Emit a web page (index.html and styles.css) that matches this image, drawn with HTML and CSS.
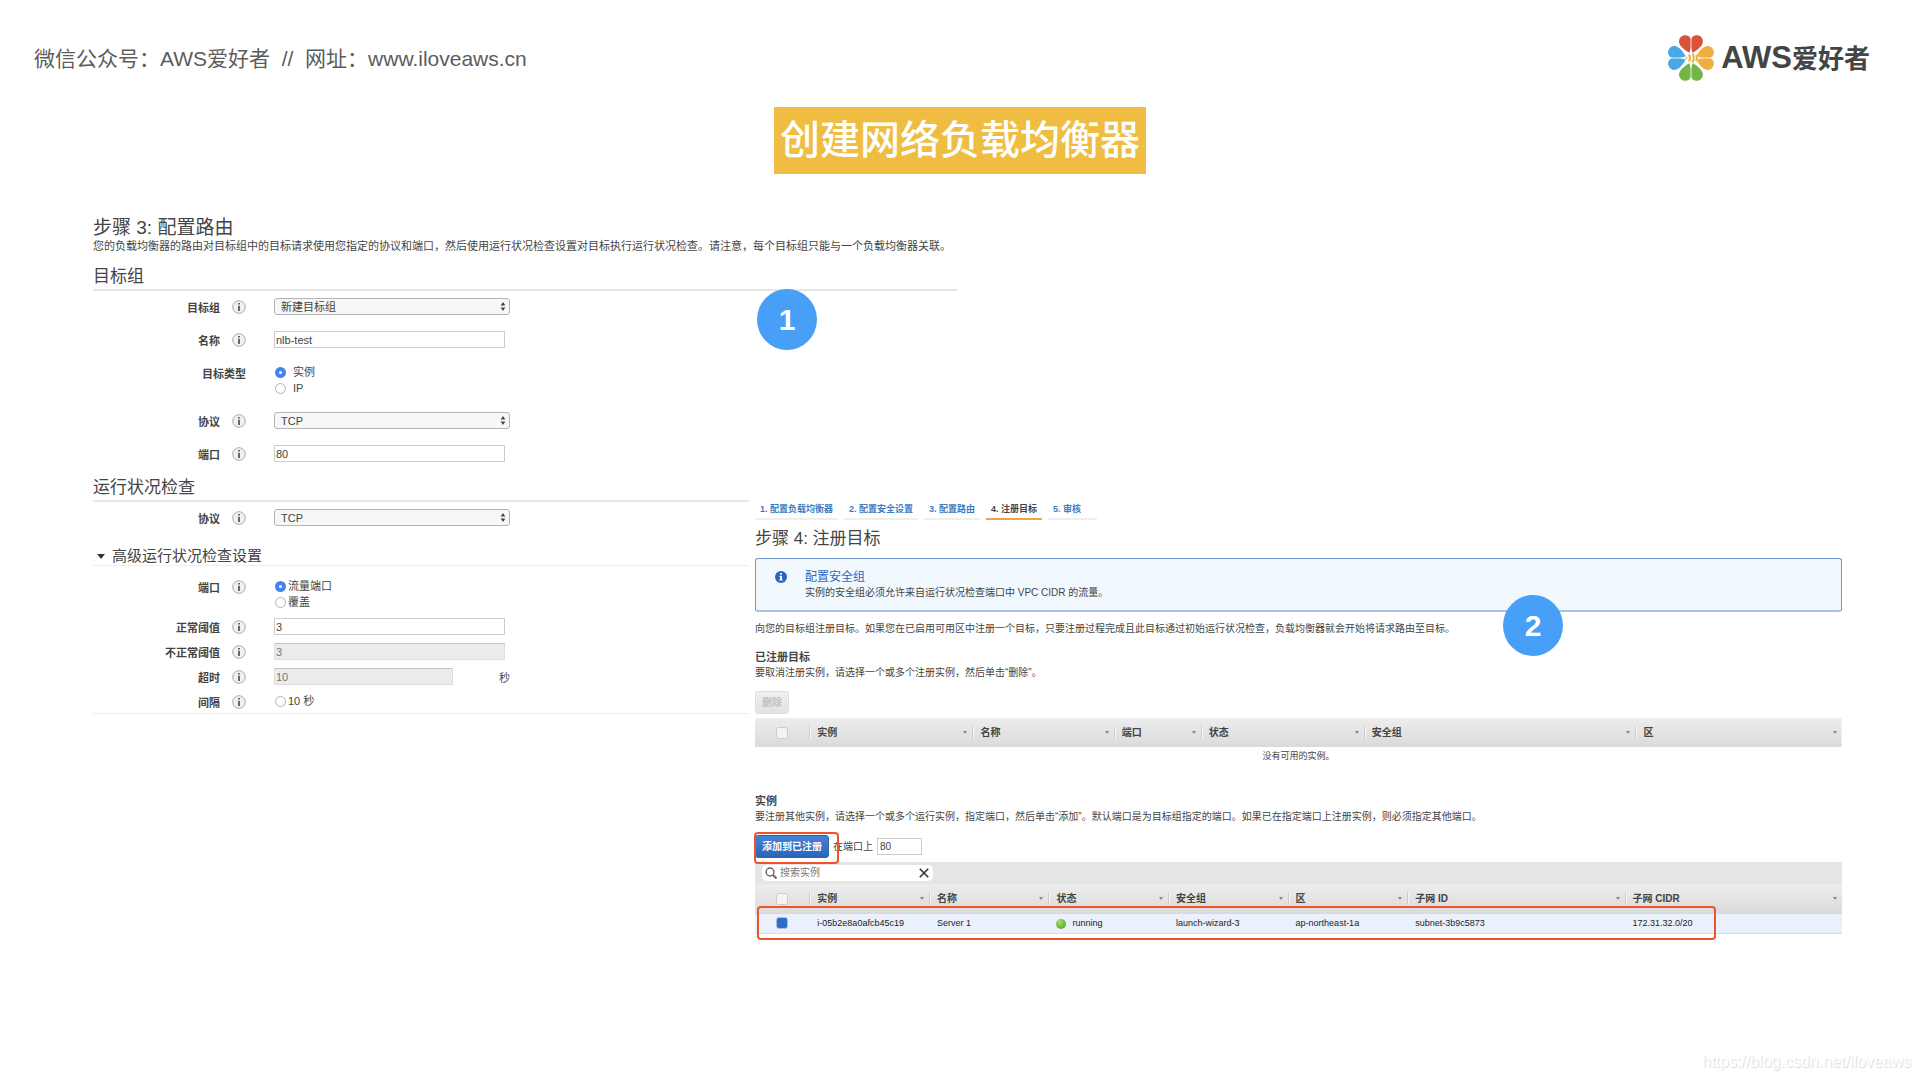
FILE: index.html
```html
<!DOCTYPE html>
<html lang="zh-CN">
<head>
<meta charset="utf-8">
<meta name="viewport" content="width=device-width, initial-scale=1">
<title>创建网络负载均衡器</title>
<link rel="stylesheet" href="styles.css">
</head>
<body>
<svg class="defs" width="0" height="0" aria-hidden="true">
  <symbol id="info" viewBox="0 0 14 14">
    <circle cx="7" cy="7" r="6.300" fill="#f1f1f1" stroke="#aaa"/>
    <path d="M6 3h2v1.600H6zM6 5.800H8V11H6z" fill="#666"/>
  </symbol>
  <symbol id="updown" viewBox="0 0 6 10">
    <path d="M3 0l2.600 4H.4zM3 10L.4 6h5.200z" fill="#444"/>
  </symbol>
</svg>

<header class="top">
  <p class="account">微信公众号：AWS爱好者&nbsp; //&nbsp; 网址：www.iloveaws.cn</p>
  <div class="logo">
    <svg class="flower" viewBox="0 0 48 48" aria-hidden="true">
      <defs><path id="petal" d="M24 18.500C21.500 15.500 17.800 10.500 17.800 6.500C17.800 2.800 20.500.2 24 .2S30.200 2.800 30.200 6.500C30.200 10.500 26.500 15.500 24 18.500z"/></defs>
      <g fill="#d9533c"><use href="#petal" transform="rotate(-19 24 24)"/><use href="#petal" transform="rotate(19 24 24)"/></g>
      <g fill="#f0ae3e"><use href="#petal" transform="rotate(71 24 24)"/><use href="#petal" transform="rotate(109 24 24)"/></g>
      <g fill="#74b548"><use href="#petal" transform="rotate(161 24 24)"/><use href="#petal" transform="rotate(199 24 24)"/></g>
      <g fill="#4aa8e8"><use href="#petal" transform="rotate(251 24 24)"/><use href="#petal" transform="rotate(289 24 24)"/></g>
      <path d="M24 .5V18M24 30V47.500M.5 24H17M31 24H47.500" stroke="#fff" stroke-width="1" opacity=".8"/>
      <ellipse cx="25.500" cy="24" rx="6" ry="5" fill="#fff"/>
      <path d="M22 20.500Q24 24 22 27.500M25.500 19.500Q28 24 25.500 28.500M29 21Q31 24 29 27" fill="none" stroke="#f0ae3e" stroke-width="2"/>
      <circle cx="19.500" cy="24" r="1" fill="#f0ae3e"/>
    </svg>
    <span class="logo-text"><span class="logo-latin">AWS</span>爱好者</span>
  </div>
</header>

<main>
  <h1 class="title"><span>创建网络负载均衡器</span></h1>

  <div class="board">
    <section class="panel routing">
      <h2 class="step">步骤 3: 配置路由</h2>
      <p class="intro">您的负载均衡器的路由对目标组中的目标请求使用您指定的协议和端口，然后使用运行状况检查设置对目标执行运行状况检查。请注意，每个目标组只能与一个负载均衡器关联。</p>

      <h3 class="group">目标组</h3>
      <div class="form loose">
        <div class="row">
          <div class="name"><label for="tg">目标组</label><svg class="info"><use href="#info"/></svg></div>
          <div class="select"><select id="tg"><option>新建目标组</option></select><svg class="updown"><use href="#updown"/></svg></div>
        </div>
        <div class="row">
          <div class="name"><label for="nm">名称</label><svg class="info"><use href="#info"/></svg></div>
          <input class="text" id="nm" type="text" value="nlb-test">
        </div>
        <div class="row">
          <div class="name"><span>目标类型</span></div>
          <div class="radios spaced">
            <label><input type="radio" name="type" checked>实例</label>
            <label><input type="radio" name="type">IP</label>
          </div>
        </div>
        <div class="row">
          <div class="name"><label for="pr">协议</label><svg class="info"><use href="#info"/></svg></div>
          <div class="select"><select id="pr"><option>TCP</option></select><svg class="updown"><use href="#updown"/></svg></div>
        </div>
        <div class="row">
          <div class="name"><label for="pt">端口</label><svg class="info"><use href="#info"/></svg></div>
          <input class="text" id="pt" type="text" value="80">
        </div>
      </div>

      <h3 class="group health">运行状况检查</h3>
      <div class="form">
        <div class="row">
          <div class="name"><label for="hp">协议</label><svg class="info"><use href="#info"/></svg></div>
          <div class="select"><select id="hp"><option>TCP</option></select><svg class="updown"><use href="#updown"/></svg></div>
        </div>
      </div>

      <h4 class="advanced"><svg viewBox="0 0 8 5" aria-hidden="true"><path d="M0 0h8L4 5z" fill="#333"/></svg>高级运行状况检查设置</h4>
      <div class="form tight">
        <div class="row">
          <div class="name"><span>端口</span><svg class="info"><use href="#info"/></svg></div>
          <div class="radios">
            <label><input type="radio" name="port" checked>流量端口</label>
            <label><input type="radio" name="port">覆盖</label>
          </div>
        </div>
        <div class="row">
          <div class="name"><label for="ok">正常阈值</label><svg class="info"><use href="#info"/></svg></div>
          <input class="text" id="ok" type="text" value="3">
        </div>
        <div class="row">
          <div class="name"><label for="bad">不正常阈值</label><svg class="info"><use href="#info"/></svg></div>
          <input class="text" id="bad" type="text" value="3" disabled>
        </div>
        <div class="row">
          <div class="name"><label for="to">超时</label><svg class="info"><use href="#info"/></svg></div>
          <div class="with-unit"><input class="text short" id="to" type="text" value="10" disabled><span>秒</span></div>
        </div>
        <div class="row">
          <div class="name"><span>间隔</span><svg class="info"><use href="#info"/></svg></div>
          <div class="radios"><label><input type="radio" name="interval">10 秒</label></div>
        </div>
      </div>
      <span class="badge badge-one">1</span>
    </section>

    <section class="panel targets">
      <nav class="tabs">
        <a href="#">1. 配置负载均衡器</a>
        <a href="#">2. 配置安全设置</a>
        <a href="#">3. 配置路由</a>
        <a href="#" class="current">4. 注册目标</a>
        <a href="#" class="last">5. 审核</a>
      </nav>
      <h2 class="step small">步骤 4: 注册目标</h2>

      <div class="notice">
        <svg viewBox="0 0 12 12" aria-hidden="true"><circle cx="6" cy="6" r="6" fill="#2864c0"/><path d="M5 2h2v1.600H5zM4.200 4.800H7v3.800h.8v1H4.200v-1H5V5.800h-.8z" fill="#fff"/></svg>
        <div>
          <h3>配置安全组</h3>
          <p>实例的安全组必须允许来自运行状况检查端口中 VPC CIDR 的流量。</p>
        </div>
        <span class="badge badge-two">2</span>
      </div>

      <p class="lead">向您的目标组注册目标。如果您在已启用可用区中注册一个目标，只要注册过程完成且此目标通过初始运行状况检查，负载均衡器就会开始将请求路由至目标。</p>

      <h3 class="sub first">已注册目标</h3>
      <p>要取消注册实例，请选择一个或多个注册实例，然后单击“删除”。</p>
      <div class="actions"><button class="btn" type="button" disabled>删除</button></div>
      <table class="registered">
        <colgroup><col class="c5"><col class="c15"><col class="c13"><col class="c8"><col class="c15"><col class="c25"><col></colgroup>
        <thead><tr>
          <th class="pick"><input type="checkbox" aria-label="全选"></th>
          <th>实例</th><th>名称</th><th>端口</th><th>状态</th><th>安全组</th><th>区</th>
        </tr></thead>
        <tbody><tr><td class="empty" colspan="7">没有可用的实例。</td></tr></tbody>
      </table>

      <h3 class="sub second">实例</h3>
      <p>要注册其他实例，请选择一个或多个运行实例，指定端口，然后单击“添加”。默认端口是为目标组指定的端口。如果已在指定端口上注册实例，则必须指定其他端口。</p>
      <div class="actions">
        <span class="marked"><button class="btn primary" type="button">添加到已注册</button></span>
        <label for="on">在端口上</label>
        <input class="port" id="on" type="text" value="80">
      </div>
      <div class="searchbar">
        <div class="search">
          <svg viewBox="0 0 12 12" aria-hidden="true"><circle cx="5" cy="5" r="4" fill="none" stroke="#666" stroke-width="1.400"/><path d="M8 8l3.500 3.500" stroke="#666" stroke-width="2"/></svg>
          <input type="text" placeholder="搜索实例" aria-label="搜索实例">
          <button type="button" aria-label="清除"><svg viewBox="0 0 10 10"><path d="M.8.8l8.400 8.400M9.200.8L.8 9.200" stroke="#333" stroke-width="1.600"/></svg></button>
        </div>
      </div>
      <div class="instances-wrap">
        <table class="instances">
          <colgroup><col class="c5"><col class="c11"><col class="c11"><col class="c11"><col class="c11"><col class="c11"><col class="c20"><col></colgroup>
          <thead><tr>
            <th class="pick"><input type="checkbox" aria-label="全选"></th>
            <th>实例</th><th>名称</th><th>状态</th><th>安全组</th><th>区</th><th>子网 ID</th><th>子网 CIDR</th>
          </tr></thead>
          <tbody><tr>
            <td class="pick"><input type="checkbox" aria-label="选择 Server 1" checked></td>
            <td>i-05b2e8a0afcb45c19</td><td>Server 1</td><td><span class="dot"></span>running</td><td>launch-wizard-3</td><td>ap-northeast-1a</td><td>subnet-3b9c5873</td><td>172.31.32.0/20</td>
          </tr></tbody>
        </table>
        <span class="outline"></span>
      </div>
    </section>
  </div>
</main>

<footer class="watermark">https://blog.csdn.net/iloveaws</footer>
</body>
</html>
```
FILE: styles.css
```css
* { box-sizing: border-box; }

body {
  margin: 0;
  min-height: 100vh;
  display: flex;
  flex-direction: column;
  background: #fff;
  color: #444;
  font-family: "Liberation Sans", "Noto Sans CJK SC", sans-serif;
  font-size: 11px;
}

h1, h2, h3, h4, p { margin: 0; font-weight: 400; }
input, select, button { margin: 0; font: inherit; color: inherit; }
.defs { position: absolute; }

.top {
  display: flex;
  align-items: center;
  justify-content: space-between;
  padding: 34px 50px 0 34px;
}
.account { padding-top: 2px; font-size: 21px; line-height: 24px; color: #5c5c5c; }
.logo { display: flex; align-items: center; gap: 6px; }
.flower { width: 48px; height: 48px; }
.logo-text { font-size: 26px; line-height: 32px; font-weight: 700; color: #444; }
.logo-latin { font-size: 31px; }

.title { margin-top: 25px; text-align: center; font-size: 40px; font-weight: 500; line-height: 67px; color: #fff; }
.title span { display: inline-block; padding: 0 6px; background: #efbd42; }

.board {
  display: grid;
  grid-template-columns: 656px 208px 1fr;
  align-items: start;
  margin-top: 44px;
  padding: 0 78px 0 93px;
}
.panel { position: relative; grid-row: 1; }
.routing { grid-column: 1 / 3; }
.targets {
  grid-column: 2 / 4;
  margin-top: 276px;
  padding: 6px 0 0 6px;
  background: #fff;
  font-size: 10px;
  line-height: 16px;
}

.step { font-size: 19px; line-height: 20px; }
.intro { line-height: 16px; white-space: nowrap; }
.group {
  margin-top: 11px;
  border-bottom: 2px solid #e6e6e6;
  font-size: 17px;
  line-height: 24px;
}
.group.health { margin-top: 14px; }

.form { display: flex; flex-direction: column; gap: 16px; padding-top: 7px; }
.form.tight { gap: 8px; padding: 12px 0 3px; border-bottom: 1px solid #eee; }
.row { display: grid; grid-template-columns: 153px 236px; column-gap: 28px; align-items: start; }
.name {
  display: flex;
  justify-content: flex-end;
  align-items: center;
  gap: 12px;
  height: 17px;
  font-weight: 700;
}
.info { width: 14px; height: 14px; }

.select { position: relative; height: 17px; }
.select select {
  display: block;
  width: 100%;
  height: 17px;
  padding: 0 6px;
  appearance: none;
  border: 1px solid #b4b4b4;
  border-radius: 3px;
  background: #f7f7f7;
  line-height: 14px;
}
.updown { position: absolute; right: 4px; top: 4px; width: 6px; height: 9px; }

.text {
  width: 231px;
  height: 17px;
  padding: 0 1px;
  border: 1px solid #ccc;
  border-radius: 0;
  background: #fff;
}
.text:disabled { background: #ececec; border-color: #c4c4c4 #ddd #ddd; color: #777; }
.text.short { width: 179px; }
.with-unit { display: flex; justify-content: space-between; align-items: center; }

.radios { display: flex; flex-direction: column; line-height: 16px; }
.radios label { display: flex; align-items: center; gap: 2px; }
.radios.spaced label { gap: 7px; }
.radios input {
  width: 11px;
  height: 11px;
  margin-left: 1px;
  appearance: none;
  border: 1px solid #b4b4b4;
  border-radius: 50%;
  background: #fff;
}
.radios input:checked { border: 4px solid #4582f5; }

.advanced {
  display: flex;
  align-items: center;
  gap: 7px;
  margin-top: 21px;
  padding-left: 4px;
  border-bottom: 1px solid #eee;
  font-size: 15px;
  line-height: 18px;
}
.advanced svg { width: 8px; height: 5px; }

.badge {
  position: absolute;
  width: 60px;
  height: 61px;
  border-radius: 50%;
  background: #489ff8;
  color: #fff;
  font-size: 30px;
  font-weight: 700;
  line-height: 61px;
  text-align: center;
}
.badge-one { left: 664px; top: 71px; }
.badge-two { right: 278px; top: 36px; }

.tabs { display: flex; gap: 6px; }
.tabs a {
  padding: 0 5px;
  border-bottom: 2px solid #eee;
  color: #3b7cc0;
  font-size: 9px;
  font-weight: 700;
  line-height: 18px;
  text-decoration: none;
}
.tabs .current { border-color: #f2a144; color: #444; }
.tabs .last { padding-right: 16px; }
.step.small { margin-top: 8px; font-size: 17px; line-height: 22px; }

.notice {
  position: relative;
  display: flex;
  gap: 18px;
  margin-top: 8px;
  padding: 10px 19px 9px;
  border: 1px solid #7196d4;
  border-bottom: 2px solid #a9c3e8;
  border-radius: 3px;
  background: #f1f8fe;
}
.notice > svg { flex: none; width: 12px; height: 12px; margin-top: 2px; }
.notice h3 { font-size: 12px; color: #2f68c0; }

.lead { margin-top: 9px; }
.sub { font-size: 11px; font-weight: 700; }
.sub.first { margin-top: 12px; }
.sub.second { margin-top: 29px; }

.actions { display: flex; align-items: center; gap: 4px; margin: 10px 0 4px; }
.btn {
  height: 23px;
  padding: 0 6px;
  border: 1px solid #ddd;
  border-radius: 3px;
  background: linear-gradient(#f0f0f0, #e2e2e2);
  font-weight: 700;
  line-height: 20px;
}
.btn:disabled { color: #c0c0c0; }
.btn.primary { border-color: #2e64b5; background: linear-gradient(#4682d4, #2c65b8); color: #fff; }
.marked { position: relative; }
.marked::after, .outline {
  content: "";
  position: absolute;
  border: 2px solid #ee5428;
  border-radius: 4px;
  pointer-events: none;
}
.marked::after { inset: -3px -10px -6px -1px; }
.port { width: 45px; height: 17px; padding: 0 2px; border: 1px solid #ccc; }

table { width: 100%; border-collapse: collapse; table-layout: fixed; }
.c5 { width: 5%; }
.c8 { width: 8%; }
.c11 { width: 11%; }
.c13 { width: 13%; }
.c15 { width: 15%; }
.c20 { width: 20%; }
.c25 { width: 25%; }
thead tr { height: 29px; background: linear-gradient(#ededed, #dadada); }
th {
  position: relative;
  padding: 0 8px;
  text-align: left;
  font-weight: 700;
}
th + th::before {
  content: "";
  position: absolute;
  left: 0;
  top: 8px;
  height: 13px;
  border-left: 1px solid #ccc;
  border-right: 1px solid #f5f5f5;
}
th + th::after {
  content: "";
  position: absolute;
  right: 5px;
  top: 13px;
  border: 2px solid transparent;
  border-top: 3px solid #888;
}
td { padding: 0 8px; font-size: 9px; white-space: nowrap; }
.empty { height: 17px; text-align: center; }
.pick { padding: 0 0 0 21px; }
.pick input {
  display: block;
  width: 12px;
  height: 12px;
  appearance: none;
  border: 1px solid #ccc;
  border-radius: 3px;
  background: #f5f5f5;
}
.pick input:checked { border: 1px solid #a9bfdf; background: #2f6bc8; }

.searchbar { padding: 3px 7px; background: #e5e5e5; }
.search {
  display: flex;
  align-items: center;
  gap: 3px;
  width: 171px;
  height: 16px;
  padding: 0 4px 0 3px;
  border-radius: 5px;
  background: #fff;
}
.search svg { display: block; width: 12px; height: 12px; flex: none; }
.search input { flex: 1; min-width: 0; padding: 0; border: 0; background: none; outline: 0; }
.search input::placeholder { color: #777; opacity: 1; }
.search button { padding: 0; border: 0; background: none; }
.search button svg { width: 10px; height: 10px; }

.instances-wrap { position: relative; }
.instances thead tr { height: 30px; }
.instances tbody tr { height: 19px; background: #eaf1fc; color: #222; border-bottom: 1px solid #d5dbe5; }
.dot {
  display: inline-block;
  width: 10px;
  height: 10px;
  margin-right: 6px;
  border-radius: 50%;
  background: radial-gradient(circle at 35% 30%, #a5e26c, #3f9c1c);
  vertical-align: middle;
}
.outline { left: 2px; right: 126px; top: 22px; bottom: -6px; }

.watermark {
  margin-top: auto;
  padding: 0 9px 9px 0;
  text-align: right;
  font-size: 16px;
  line-height: 18px;
  color: #fff;
  text-shadow: 1px 1px 1px #d8d8d8;
}
```
